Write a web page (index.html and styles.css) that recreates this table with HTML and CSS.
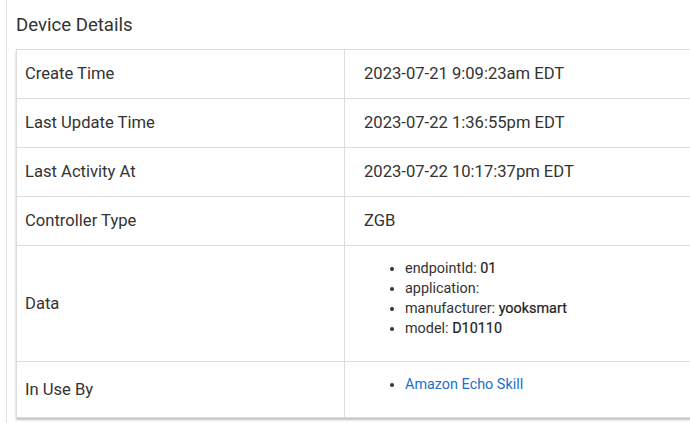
FILE: index.html
```html
<!DOCTYPE html>
<html>
<head>
<meta charset="utf-8">
<link rel="stylesheet" href="styles.css">
</head>
<body>
<div class="panel">
  <h2 class="title">Device Details</h2>
  <table class="details">
    <tr><td class="label">Create Time</td><td class="value">2023-07-21 9:09:23am EDT</td></tr>
    <tr><td class="label">Last Update Time</td><td class="value">2023-07-22 1:36:55pm EDT</td></tr>
    <tr><td class="label">Last Activity At</td><td class="value">2023-07-22 10:17:37pm EDT</td></tr>
    <tr><td class="label">Controller Type</td><td class="value">ZGB</td></tr>
    <tr class="list-row"><td class="label">Data</td><td class="value">
      <ul class="items">
        <li>endpointId: <b>01</b></li>
        <li>application: </li>
        <li>manufacturer: <b>yooksmart</b></li>
        <li>model: <b>D10110</b></li>
      </ul>
    </td></tr>
    <tr class="list-row"><td class="label">In Use By</td><td class="value">
      <ul class="items">
        <li><a href="#">Amazon Echo Skill</a></li>
      </ul>
    </td></tr>
  </table>
</div>
</body>
</html>
```
FILE: styles.css
```css
html, body {
  margin: 0;
  padding: 0;
  background: #fff;
  overflow: hidden;
}
body {
  font-family: Roboto, "Liberation Sans", sans-serif;
  color: #333;
}
.panel {
  margin-left: 6px;
  border-left: 1px solid #e4e4e4;
  padding-left: 9px;
  min-height: 423px;
}
.title {
  margin: 0;
  font-size: 18.6px;
  font-weight: 400;
  line-height: 22px;
  padding-top: 14px;
  height: 35px;
  color: #333;
}
.details {
  border-collapse: collapse;
  width: 760px;
  box-shadow: 0 2px 2px rgba(0,0,0,0.25);
  border: 1px solid #ddd;
}
.details td {
  border: 1px solid #ddd;
  font-size: 16.6px;
  line-height: 24px;
  padding: 12px 8px 12px 8px;
  vertical-align: middle;
}
.details td.label {
  width: 311px;
}
.details td.value {
  padding-left: 19px;
}
.list-row td.value {
  padding-top: 13px;
  padding-bottom: 11px;
}
.items {
  margin: 0 0 11px 0;
  padding-left: 41px;
  font-size: 14.4px;
  line-height: 20px;
}
.items b {
  font-weight: 400;
  -webkit-text-stroke: 0.2px #222;
  color: #222;
}
.items a {
  color: #1a6fce;
  text-decoration: none;
}
```
